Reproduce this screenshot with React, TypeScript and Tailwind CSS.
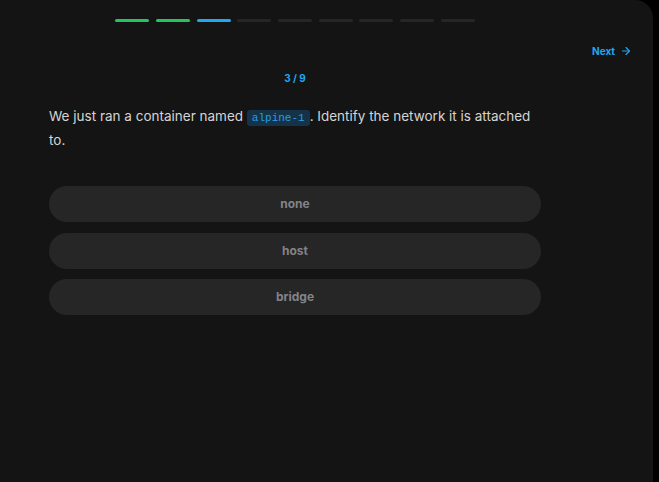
import { ArrowRight } from "lucide-react";

const steps = ["done", "done", "current", "todo", "todo", "todo", "todo", "todo", "todo"];
const options = ["none", "host", "bridge"];

export default function App() {
  return (
    <div className="min-h-screen bg-black" style={{ fontFamily: "Inter, 'Noto Sans', sans-serif" }}>
      <div className="w-[653px] h-[482px] bg-[#141414] rounded-tr-[18px] flex flex-col">
        <div className="ml-[49px] w-[492px] pt-[19px] flex justify-center gap-[6.7px]">
          {steps.map((s, i) => (
            <div
              key={i}
              className={
                "w-[34px] h-[3px] rounded-full " +
                (s === "done" ? "bg-[#22c55e]" : s === "current" ? "bg-[#1ea7f2]" : "bg-[#262626]")
              }
            />
          ))}
        </div>

        <div className="mt-[22px] pr-[21px] flex justify-end">
          <button className="flex items-center gap-[5px] text-[10px] leading-[14px] font-bold text-[#1ea7f2]">
            Next
            <ArrowRight size={12} strokeWidth={2.25} />
          </button>
        </div>

        <div className="ml-[49px] w-[492px] mt-[13px] text-center text-[10px] leading-[14px] font-bold text-[#1ea7f2]">
          3 / 9
        </div>

        <p className="ml-[49px] w-[492px] mt-[20px] text-[13.5px] leading-[22px] text-[#d4d4d4]">
          We just ran a container named{" "}
          <code
            className="px-[5px] py-[2px] rounded-[3px] bg-[#143349] text-[#2d9be0] text-[11px]"
            style={{ fontFamily: "'Liberation Mono', monospace" }}
          >
            alpine-1
          </code>
          . Identify the network it is attached to.
        </p>

        <div className="ml-[49px] w-[492px] mt-[35px] flex flex-col gap-[10.5px]">
          {options.map((o) => (
            <button
              key={o}
              className="h-[36px] w-full rounded-full bg-[#262626] text-[12px] font-bold text-[#838388]"
            >
              {o}
            </button>
          ))}
        </div>
      </div>
    </div>
  );
}
